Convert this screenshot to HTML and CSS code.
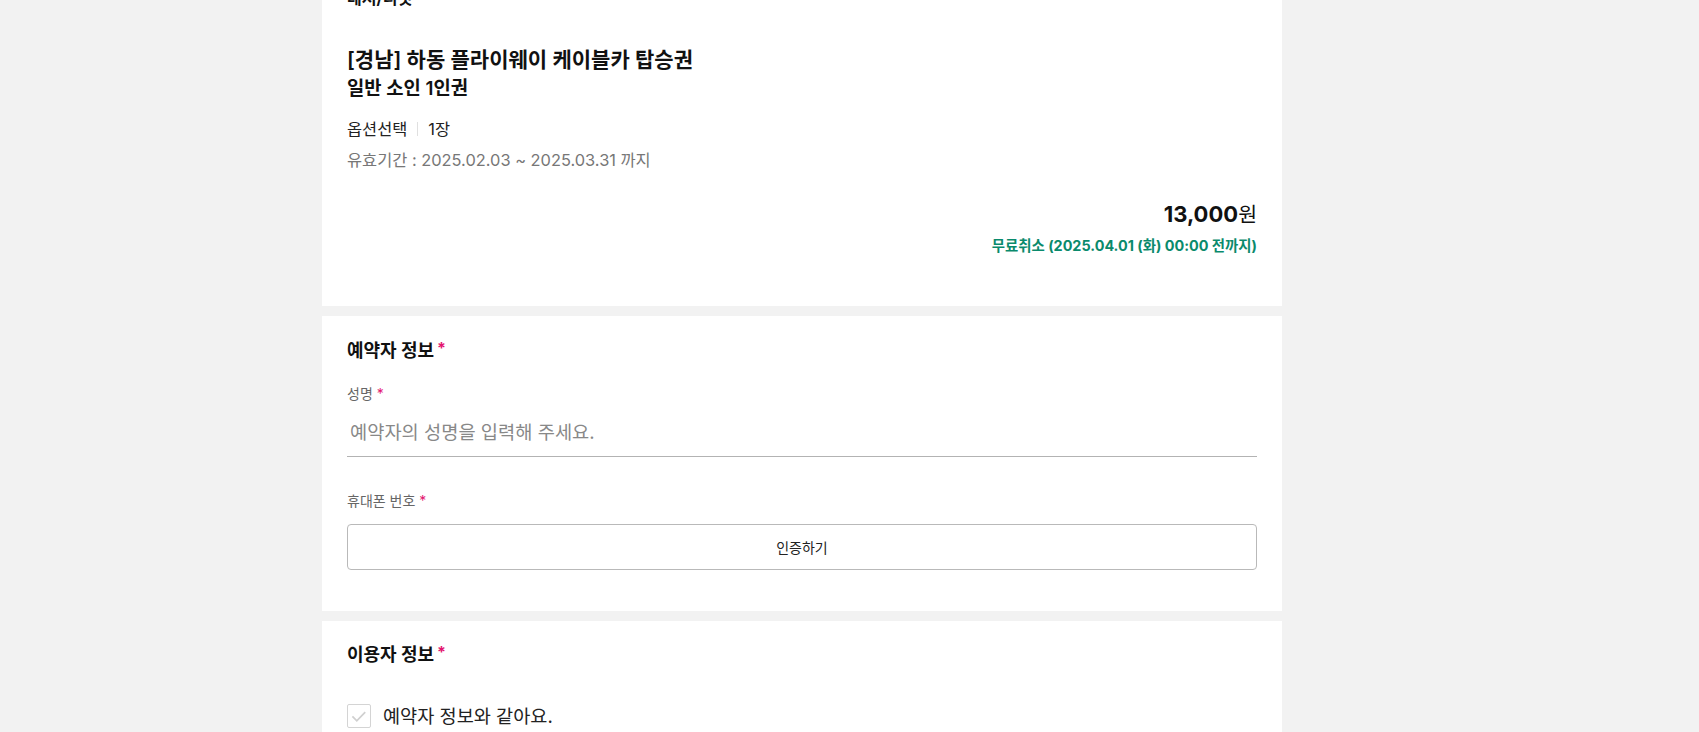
FILE: index.html
```html
<!DOCTYPE html>
<html lang="ko">
<head>
<meta charset="utf-8">
<title>예약하기</title>
<link rel="stylesheet" href="styles.css">
</head>
<body>
<div class="page">
  <main class="column">
    <section class="card product">
      <div class="category">레저/티켓</div>
      <h2 class="title">[경남] 하동 플라이웨이 케이블카 탑승권</h2>
      <div class="subtitle">일반 소인 1인권</div>
      <div class="option"><span>옵션선택</span><i class="divider"></i><span>1장</span></div>
      <div class="validity">유효기간 : 2025.02.03 ~ 2025.03.31 까지</div>
      <div class="price-box">
        <div class="price"><strong>13,000</strong><span>원</span></div>
        <div class="cancel">무료취소 (2025.04.01 (화) 00:00 전까지)</div>
      </div>
    </section>

    <section class="card form">
      <h3 class="section-title">예약자 정보<span class="req">*</span></h3>
      <label class="field-label">성명 <span class="req-sm">*</span></label>
      <input class="text-input" type="text" placeholder="예약자의 성명을 입력해 주세요.">
      <label class="field-label phone">휴대폰 번호 <span class="req-sm">*</span></label>
      <button class="verify" type="button">인증하기</button>
    </section>

    <section class="card users">
      <h3 class="section-title">이용자 정보<span class="req">*</span></h3>
      <label class="check-row">
        <span class="checkbox">
          <svg viewBox="0 0 24 24" width="24" height="24"><path d="M4.8 12.4l4.8 4.8 9.2-9.4" fill="none" stroke="#d0d0d0" stroke-width="1.9"/></svg>
        </span>
        <span class="check-label">예약자 정보와 같아요.</span>
      </label>
    </section>
  </main>
</div>
</body>
</html>
```

FILE: styles.css
```css
* { box-sizing: border-box; }
html, body { margin: 0; padding: 0; }
body {
  background: #f2f2f2;
  font-family: "Inter", "Noto Sans CJK KR", sans-serif;
  color: #111;
  height: 732px;
  overflow: hidden;
}
.page {
  padding-left: 322px;
}
.column {
  width: 960px;
  display: flex;
  flex-direction: column;
  gap: 10px;
  margin-top: -14px;
}
.card {
  background: #fff;
  padding: 0 25px;
}
.product {
  padding-bottom: 50px;
}
.category {
  font-size: 16px;
  font-weight: 700;
  line-height: 24px;
  color: #111;
}
.title {
  margin: 35px 0 0;
  font-size: 21px;
  font-weight: 600;
  line-height: 30px;
  color: #111;
}
.subtitle {
  margin-top: 0;
  font-size: 18.8px;
  font-weight: 600;
  line-height: 28px;
  color: #111;
}
.option {
  margin-top: 14px;
  display: flex;
  align-items: center;
  font-size: 16.4px;
  line-height: 24px;
  color: #222;
}
.divider {
  display: inline-block;
  width: 1px;
  height: 14px;
  background: #e0e0e0;
  margin: 0 10px 0 10px;
}
.validity {
  margin-top: 7px;
  font-size: 16.4px;
  line-height: 24px;
  color: #777;
}
.price-box {
  margin-top: 26px;
  display: flex;
  flex-direction: column;
  align-items: flex-end;
}
.price {
  line-height: 32px;
  color: #111;
}
.price strong {
  font-size: 22px;
  font-weight: 700;
}
.price span {
  font-size: 20.5px;
  font-weight: 400;
}
.cancel {
  margin-top: 4px;
  font-size: 14.4px;
  font-weight: 700;
  line-height: 20px;
  color: #0a8a6c;
}
.form {
  padding-top: 22px;
  padding-bottom: 41px;
  display: flex;
  flex-direction: column;
}
.section-title {
  margin: 0;
  font-size: 18px;
  font-weight: 700;
  line-height: 26px;
  color: #111;
  display: flex;
  align-items: flex-start;
}
.req {
  color: #e3156f;
  font-size: 16px;
  line-height: 20px;
  margin-left: 3px;
}
.field-label {
  margin-top: 20px;
  font-size: 14px;
  line-height: 20px;
  color: #666;
}
.req-sm {
  color: #e3156f;
}
.field-label.phone {
  margin-top: 34px;
}
.text-input {
  margin-top: 5px;
  height: 48px;
  border: 0;
  border-bottom: 1px solid #b3b3b3;
  padding: 0 3px;
  font-family: inherit;
  font-size: 18.7px;
  color: #222;
  outline: none;
  background: transparent;
}
.text-input::placeholder {
  color: #888;
}
.verify {
  margin-top: 13px;
  height: 46px;
  border: 1px solid #b9b9b9;
  border-radius: 4px;
  background: #fff;
  font-family: inherit;
  font-size: 14px;
  color: #222;
  cursor: pointer;
}
.users {
  padding-top: 21px;
  padding-bottom: 40px;
}
.check-row {
  margin-top: 35px;
  display: flex;
  align-items: center;
  gap: 12px;
}
.checkbox {
  width: 24px;
  height: 24px;
  border: 1px solid #d4d4d4;
  border-radius: 2px;
  display: flex;
  align-items: center;
  justify-content: center;
  flex: none;
}
.checkbox svg {
  display: block;
  width: 22px;
  height: 22px;
}
.check-label {
  font-size: 18.6px;
  line-height: 26px;
  color: #222;
}
```
